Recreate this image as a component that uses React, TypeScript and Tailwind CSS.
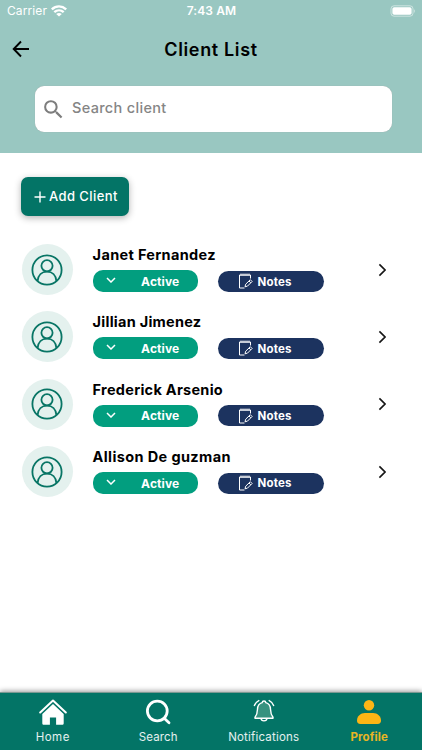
import React from 'react';

const clients = [
  { name: 'Janet Fernandez', tracking: 'tracking-[0.33px]' },
  { name: 'Jillian Jimenez', tracking: 'tracking-[0.25px]' },
  { name: 'Frederick Arsenio', tracking: 'tracking-[0.27px]' },
  { name: 'Allison De guzman', tracking: 'tracking-[0.38px]' },
];

const StatusBar: React.FC = () => (
  <div className="h-[22px] pl-[7px] pr-[6px] grid grid-cols-3 items-center text-white">
    <div className="flex items-center">
      <span className="text-[12px] tracking-[0.1px]">Carrier</span>
      <svg viewBox="0 0 16 12" className="w-4 h-3 ml-1" fill="none" stroke="white" strokeWidth="2.4">
        <path d="M0.8 4.3C5 0.4 11 0.4 15.2 4.3" />
        <path d="M3.3 7.2C6.1 4.7 9.9 4.7 12.7 7.2" />
        <path d="M8 11.5L5.2 8.9C7 7.6 9 7.6 10.8 8.9Z" fill="white" stroke="none" />
      </svg>
    </div>
    <span className="text-center text-xs font-semibold tracking-[0.1px]">7:43 AM</span>
    <svg viewBox="0 0 26 12" className="w-[26px] h-3 ml-auto" fill="none">
      <rect x="1" y="0.8" width="22" height="10.4" rx="3" stroke="white" strokeOpacity="0.5" />
      <rect x="2.4" y="2.2" width="19.2" height="7.6" rx="1.8" fill="white" />
      <path d="M24.3 4.2c1 .3 1 3.2 0 3.6z" fill="white" fillOpacity="0.6" />
    </svg>
  </div>
);

const Avatar: React.FC = () => (
  <div className="w-[51px] h-[51px] shrink-0 rounded-full bg-[#e4f1ee] flex items-center justify-center">
    <svg viewBox="0 0 32 32" className="w-8 h-8" fill="none" stroke="#087565" strokeWidth="1.8">
      <circle cx="16" cy="16" r="14.6" />
      <circle cx="16" cy="11.8" r="5.6" />
      <path d="M6.6 27C7 21.2 10.8 17.6 16 17.6S25 21.2 25.4 27" />
    </svg>
  </div>
);

const ClientRow: React.FC<{ name: string; tracking: string }> = ({ name, tracking }) => (
  <div className="h-[67.3px] flex items-start">
    <Avatar />
    <div className="ml-5">
      <div className={`h-[22px] leading-[22px] text-[14.5px] font-bold text-black whitespace-nowrap ${tracking}`}>{name}</div>
      <div className="mt-1 flex items-center gap-5">
        <button className="w-[105.5px] h-[22px] rounded-[10px] bg-[#029e7f] text-white flex items-center pl-[13px]">
          <svg viewBox="0 0 10 6" className="w-[10px] h-[6px] -mt-0.5" fill="none" stroke="white" strokeWidth="1.5">
            <path d="M1 1l4 4 4-4" />
          </svg>
          <span className="ml-[25.5px] mt-px text-xs font-bold tracking-[0.1px]">Active</span>
        </button>
        <button className="w-[105.5px] h-[21px] rounded-[10.5px] bg-[#1c335f] text-white flex items-center pl-5">
          <svg viewBox="0 0 15 16" className="w-[15px] h-4" fill="none" stroke="white" strokeWidth="1">
            <path d="M12.5 5.5V2H1.5V15H6.5" />
            <path d="M3 0.5V3M5 0.5V3M7 0.5V3M9 0.5V3M11 0.5V3" />
            <path d="M7 13.8l.7-2.6 4.6-4.5 1.8 1.8-4.6 4.6zM11 8l1.8 1.8" />
          </svg>
          <span className="ml-[4.5px] mt-0.5 text-[11.5px] font-bold tracking-[0.15px]">Notes</span>
        </button>
      </div>
    </div>
    <svg viewBox="0 0 8 14" className="w-2 h-[14px] ml-auto mt-[18.5px]" fill="none" stroke="#161616" strokeWidth="1.6">
      <path d="M1.4 1.4L7 7l-5.6 5.6" />
    </svg>
  </div>
);

const HomeIcon: React.FC = () => (
  <svg viewBox="0 0 28 26" className="w-7 h-[26px]" fill="white">
    <path d="M1.2 13.5L14 1.5l12.8 12" fill="none" stroke="white" strokeWidth="2" strokeLinecap="round" strokeLinejoin="round" />
    <path d="M14 5L3.3 15v9.2c0 1 .6 1.6 1.6 1.6h6v-7.3h6.2v7.3h6c1 0 1.6-.6 1.6-1.6V15z" />
  </svg>
);

const SearchIcon: React.FC = () => (
  <svg viewBox="0 0 26 26" className="w-[26px] h-[26px]" fill="none" stroke="white" strokeWidth="2.8" strokeLinecap="round">
    <circle cx="12.3" cy="12" r="9.9" />
    <path d="M19.2 19.3l4.8 4.5" />
  </svg>
);

const BellIcon: React.FC = () => (
  <svg viewBox="0 0 22 24" className="w-[22px] h-6 -mt-[3px]" fill="none" stroke="white" strokeWidth="1.4" strokeLinejoin="round">
    <path d="M8 19.5c.3 3.2 5.7 3.2 6 0" />
    <path d="M9.2 3.6C9.3 1.4 12.7 1.4 12.8 3.6C16 4.4 17.4 7 17.5 10.2C17.6 14 18.4 16.2 20 18.2V19.2H2V18.2C3.6 16.2 4.4 14 4.5 10.2C4.6 7 6 4.4 9.2 3.6Z" fill="#36927f" />
    <path d="M1.4 6.6C2.2 4.4 3.6 2.6 5.8 1.6M20.6 6.6C19.8 4.4 18.4 2.6 16.2 1.6" strokeLinecap="round" />
  </svg>
);

const ProfileIcon: React.FC = () => (
  <svg viewBox="0 0 24 24" className="w-6 h-6" fill="#fdb515">
    <circle cx="12" cy="5.2" r="5.2" />
    <path d="M8 13H16C20.5 13 24 16.3 24 20.5C24 22.8 22.9 24 20.6 24H3.4C1.1 24 0 22.8 0 20.5C0 16.3 3.5 13 8 13Z" />
  </svg>
);

const tabs = [
  { label: 'Home', icon: <HomeIcon />, style: 'text-white/90 tracking-[0.5px]' },
  { label: 'Search', icon: <SearchIcon />, style: 'text-white/90 tracking-[0.1px]' },
  { label: 'Notifications', icon: <BellIcon />, style: 'text-white/90 tracking-[0.2px]' },
  { label: 'Profile', icon: <ProfileIcon />, style: 'text-[#e8b524] font-bold tracking-[0.1px]' },
];

const App: React.FC = () => {
  return (
    <div className="h-[750px] w-full flex flex-col overflow-hidden bg-white font-['Inter',sans-serif]">
      <header className="h-[152.5px] shrink-0 bg-[#99c7c1]">
        <StatusBar />
        <div className="h-[54px] px-3 grid grid-cols-3 items-center">
          <svg viewBox="0 0 18 18" className="w-[18px] h-[18px]" fill="none" stroke="black" strokeWidth="1.9">
            <path d="M17 9H2M9 1.5L1.7 9 9 16.5" />
          </svg>
          <h1 className="text-center text-[18px] font-semibold text-black whitespace-nowrap tracking-[0.65px]">Client List</h1>
        </div>
        <div className="mt-[10px] ml-[35px] mr-[30.5px] h-[46px] rounded-[9px] bg-white shadow-[0_0_1px_#a0a0a0] flex items-center pl-[6px]">
          <svg viewBox="0 0 24 24" className="w-[25px] h-[25px]" fill="#7d7d7d">
            <path d="M15.5 14h-.79l-.28-.27A6.47 6.47 0 0016 9.5 6.5 6.5 0 109.5 16c1.61 0 3.09-.59 4.23-1.57l.27.28v.79l5 4.99L20.49 19l-4.99-5zm-6 0C7.01 14 5 11.99 5 9.5S7.01 5 9.5 5 14 7.01 14 9.5 11.99 14 9.5 14z" />
          </svg>
          <span className="ml-[6px] -mt-[3px] text-[14.5px] font-medium text-[#858585] tracking-[0.32px]">Search client</span>
        </div>
      </header>

      <main className="flex-1 pl-[21px] pr-9 pt-[24.5px]">
        <button className="w-[108px] h-[39px] rounded-[7px] bg-[#037466] text-white shadow-[0_2px_7px_rgba(0,0,0,0.3)] flex items-center pl-[13px]">
          <svg viewBox="0 0 12 12" className="w-3 h-3" stroke="white" strokeWidth="1.4">
            <path d="M6 0.5v11M0.5 6h11" />
          </svg>
          <span className="ml-[3px] text-[13px] font-medium whitespace-nowrap tracking-[0.42px]">Add Client</span>
        </button>
        <div className="mt-[28.2px] pl-[0.6px]">
          {clients.map((client) => (
            <ClientRow key={client.name} {...client} />
          ))}
        </div>
      </main>

      <nav className="h-[58.5px] shrink-0 grid grid-cols-4 bg-[#037466] border-t border-[#7b9993] shadow-[0_-1px_5px_rgba(0,0,0,0.4)]">
        {tabs.map((tab) => (
          <div key={tab.label} className="flex flex-col items-center pt-[6px]">
            <div className="h-[27px] flex items-center">{tab.icon}</div>
            <span className={`mt-[3px] text-[11.5px] leading-4 ${tab.style}`}>{tab.label}</span>
          </div>
        ))}
      </nav>
    </div>
  );
};

export default App;
